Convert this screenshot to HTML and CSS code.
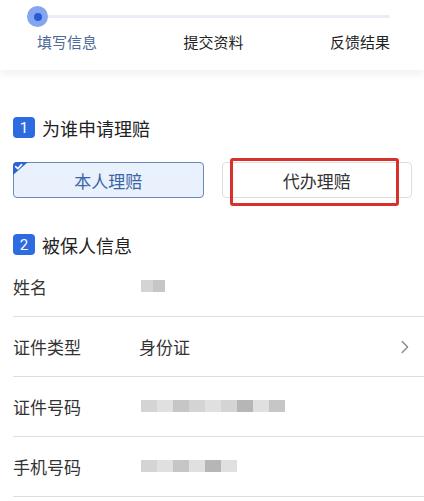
FILE: index.html
```html
<!DOCTYPE html>
<html lang="zh-CN">
<head>
<meta charset="utf-8">
<title>理赔申请</title>
<link rel="stylesheet" href="styles.css">
</head>
<body>
<div class="steps">
  <div class="track"><span class="dot"><span class="dot-core"></span></span></div>
  <div class="step-labels">
    <span class="step active">填写信息</span>
    <span class="step">提交资料</span>
    <span class="step">反馈结果</span>
  </div>
</div>
<div class="content">
  <div class="sec-title first"><span class="badge">1</span><span>为谁申请理赔</span></div>
  <div class="choices">
    <div class="choice selected">
      <svg class="corner" width="15" height="13" viewBox="0 0 15 13"><path d="M0 4 Q0 0 4 0 H15 L0 13 Z" fill="#2e63d6"/><path d="M2.6 4.6 L4.8 6.6 L8.6 2.6" fill="none" stroke="#fff" stroke-width="1.6" stroke-linecap="round" stroke-linejoin="round"/></svg>
      本人理赔
    </div>
    <div class="choice">代办理赔<span class="mark"></span></div>
  </div>
  <div class="sec-title second"><span class="badge">2</span><span>被保人信息</span></div>
  <div class="rows">
    <div class="row"><span class="label">姓名</span><span class="blur b-name"><i></i><i class="d"></i></span></div>
    <div class="row"><span class="label">证件类型</span><span class="value">身份证</span>
      <svg class="chev" width="8" height="14" viewBox="0 0 8 14"><path d="M1.2 1.5 L6.6 7 L1.2 12.5" fill="none" stroke="#8a8a8a" stroke-width="1.4" stroke-linecap="round" stroke-linejoin="round"/></svg>
    </div>
    <div class="row"><span class="label">证件号码</span><span class="blur b-id"><i></i><i class="l"></i><i class="d"></i><i></i><i class="l"></i><i></i><i class="dd"></i><i class="l"></i><i class="d"></i></span></div>
    <div class="row"><span class="label">手机号码</span><span class="blur b-phone"><i></i><i class="l"></i><i class="d"></i><i class="l"></i><i class="dd"></i><i class="l"></i></span></div>
  </div>
</div>
</body>
</html>
```

FILE: styles.css
```css
* { box-sizing: border-box; }
body {
  margin: 0;
  background: #fff;
  font-family: "Noto Sans CJK SC", "Noto Sans", sans-serif;
  color: #333;
}
.steps {
  height: 70px;
  padding: 15px 34px 0 37px;
  background: #fff;
  box-shadow: 0 5px 8px rgba(0, 0, 0, 0.05);
}
.track {
  position: relative;
  height: 3px;
  background: #e8edf6;
  border-radius: 2px;
}
.dot {
  position: absolute;
  left: -10px;
  top: -9px;
  width: 21px;
  height: 21px;
  border-radius: 50%;
  background: #84a6ee;
  display: flex;
  align-items: center;
  justify-content: center;
}
.dot-core {
  width: 8px;
  height: 8px;
  border-radius: 50%;
  background: #2a5bd4;
}
.step-labels {
  display: flex;
  justify-content: space-between;
  margin-top: 14px;
  font-size: 15px;
  line-height: 20px;
  color: #222;
}
.step.active { color: #4d6a98; }
.content { padding: 0 0 0 13px; }
.sec-title {
  display: flex;
  align-items: center;
  gap: 7px;
  height: 21px;
  font-size: 18px;
  color: #222;
}
.sec-title.first { margin-top: 47px; }
.sec-title.second { margin-top: 36px; }
.badge {
  width: 22px;
  height: 21px;
  border-radius: 4px;
  background: #2f6be0;
  color: #fff;
  font-family: Roboto, "Noto Sans", sans-serif;
  font-size: 15px;
  display: flex;
  align-items: center;
  justify-content: center;
}
.choices {
  display: flex;
  gap: 18px;
  margin-top: 24px;
  padding-right: 12px;
}
.choice {
  position: relative;
  flex: 1;
  height: 36px;
  border: 1px solid #dedede;
  border-radius: 4px;
  display: flex;
  align-items: center;
  justify-content: center;
  font-size: 17px;
  color: #333;
}
.choice.selected {
  border: 1.5px solid #6c88b6;
  background: #e9f1fc;
  color: #3a64a6;
}
.corner {
  position: absolute;
  left: -1px;
  top: -1px;
}
.mark {
  position: absolute;
  left: 7px;
  right: 12px;
  top: -5px;
  bottom: -9px;
  border: 3px solid #d8302a;
  border-radius: 3px;
}
.rows { margin-top: 2px; }
.row {
  height: 60px;
  border-bottom: 1px solid #dedede;
  display: flex;
  align-items: center;
  font-size: 17px;
  color: #333;
}
.label { width: 126px; }
.value { flex: 1; }
.chev { margin-right: 15px; margin-top: 1px; }
.blur {
  display: flex;
  height: 12px;
  margin-left: 2px;
  filter: blur(0.6px);
}
.blur i {
  flex: 1;
  background: #d4d4d4;
}
.blur i.l { background: #e0e0e0; }
.blur i.d { background: #c6c6c6; }
.blur i.dd { background: #b6b6b6; }
.b-name { width: 24px; margin-top: -2px; }
.b-id { width: 144px; margin-top: -2px; }
.b-phone { width: 96px; margin-top: -2px; }
```
